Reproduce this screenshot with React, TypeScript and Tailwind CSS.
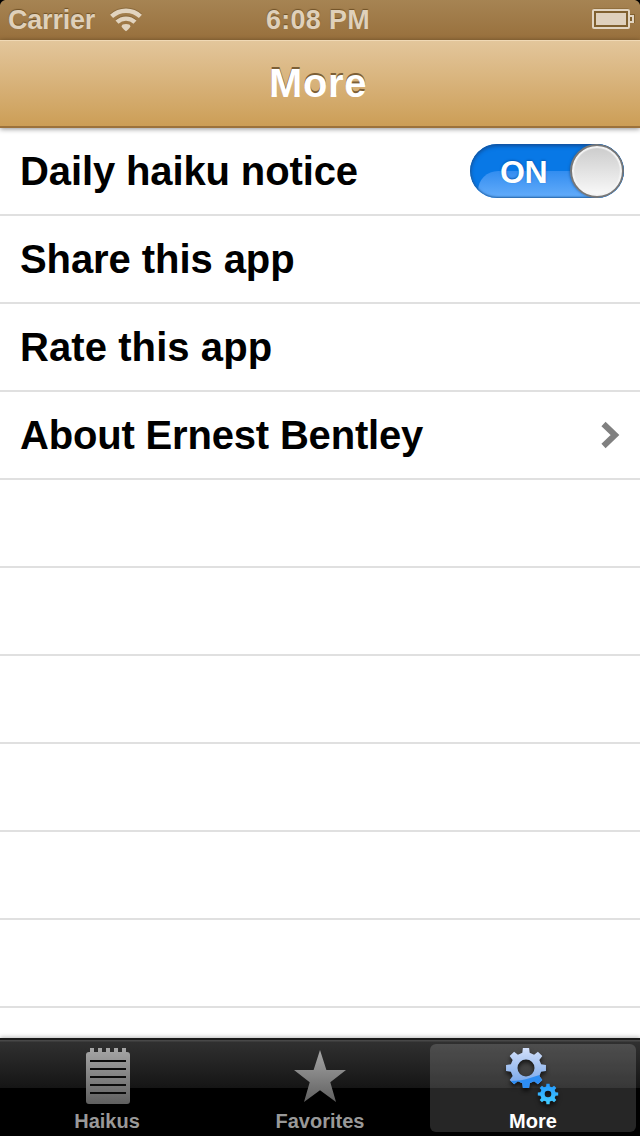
import type { ReactNode } from "react";

interface RowProps {
  label?: string;
  spacing?: string;
  children?: ReactNode;
}

function Row({ label, spacing = "", children }: RowProps) {
  return (
    <li className="flex h-[88px] shrink-0 items-center justify-between border-b-2 border-[#e0e0e0] pl-5">
      <span className={`text-[40px] leading-[86px] font-bold whitespace-nowrap text-black ${spacing}`}>
        {label}
      </span>
      {children}
    </li>
  );
}

function StatusBar() {
  return (
    <header className="relative flex h-10 items-start justify-between bg-gradient-to-b from-[#a68453] to-[#98703c] text-[27px] leading-10 font-bold text-[#dfd0ba] [text-shadow:0_-1px_1px_#6f5127]">
      {/* Rounded screen corners */}
      <svg className="absolute top-0 left-0" width="640" height="5" viewBox="0 0 640 5">
        <path d="M0 0h5Q1 1 0 5zM640 0h-5q4 1 5 5z" fill="#000" />
      </svg>
      <div className="flex w-[213px] pl-2">
        <span className="w-[101px] tracking-[-0.2px]">Carrier</span>
        <svg className="mt-[7px]" width="34" height="25" viewBox="109 7 34 25">
          <g fill="none" stroke="#715329" strokeWidth="4.600" opacity=".5">
            <path d="M111.600 15.500a21 21 0 0 1 28.800 0M117 21.300a13 13 0 0 1 18 0" />
          </g>
          <g fill="none" stroke="#e2d4bf" strokeWidth="4.400">
            <path d="M111.600 16.400a21 21 0 0 1 28.800 0M117 22.200a13 13 0 0 1 18 0" />
          </g>
          <path d="M121.700 26.300q0-2.300 4.300-2.300t4.300 2.300q0 1.500-4.300 5-4.300-3.500-4.300-5z" fill="#e2d4bf" />
        </svg>
      </div>
      <span className="w-[213px] pr-1 text-center tracking-[0.25px]">6:08 PM</span>
      <div className="flex w-[213px] justify-end pt-2 pr-[5px]">
        <svg width="44" height="22" viewBox="591 8 44 22">
          <rect x="592.500" y="8.500" width="37" height="20" rx="2" fill="#80602f" />
          <path d="M629 14h6v9h-6z" fill="#80602f" />
          <rect x="593" y="10" width="36" height="18" rx="1" fill="none" stroke="#e2d5c2" strokeWidth="2" />
          <path d="M630 16h3v6h-3" fill="none" stroke="#e2d5c2" strokeWidth="2" />
          <rect x="596" y="13" width="30" height="12" fill="#dfd0bc" />
        </svg>
      </div>
    </header>
  );
}

function Switch() {
  return (
    <div className="relative mr-4 flex h-[54px] w-[154px] items-center justify-end overflow-hidden rounded-full bg-[#0878e6]">
      {/* Glossy lower half */}
      <div className="absolute top-[27px] left-2 h-[40px] w-[154px] rounded-[22px] bg-gradient-to-b from-[#328df0] to-[#79bcff]" />
      <div className="absolute inset-0 rounded-full shadow-[inset_0_2px_4px_#0b4fa0,inset_0_0_2px_1px_#2b69a9]" />
      <span className="absolute top-0 left-[30px] text-[32px] leading-[56px] font-bold tracking-[-0.4px] text-white [text-shadow:0_-1px_2px_#075bb5]">
        ON
      </span>
      <div className="relative h-[54px] w-[54px] rounded-full border-2 border-[#777] bg-gradient-to-b from-[#cbcbcb] to-[#fafafa] shadow-[-1px_0_2px_#17508f80,inset_0_0_1px_2px_#f4f4f4]" />
    </div>
  );
}

// Eight-toothed gear outline with a round hole
function gearPath(cx: number, cy: number, outer: number, root: number, hole: number) {
  const points: string[] = [];
  for (let i = 0; i < 8; i++) {
    const a = (i * Math.PI) / 4;
    const corners = [
      [root, -0.24],
      [outer, -0.155],
      [outer, 0.155],
      [root, 0.24],
    ];
    for (const [r, d] of corners) {
      points.push(`${(cx + r * Math.cos(a + d)).toFixed(2)} ${(cy + r * Math.sin(a + d)).toFixed(2)}`);
    }
  }
  return `M${points.join("L")}ZM${cx - hole} ${cy}a${hole} ${hole} 0 1 0 ${hole * 2} 0a${hole} ${hole} 0 1 0 ${-hole * 2} 0Z`;
}

function NotepadIcon() {
  return (
    <svg width="60" height="60" viewBox="-1 0 60 60">
      <defs>
        <linearGradient id="grey" x1="0" y1="0" x2="0" y2="1">
          <stop offset="0" stopColor="#a6a6a6" />
          <stop offset="1" stopColor="#606060" />
        </linearGradient>
      </defs>
      <path
        d="M12 4h4v4h4V4h4v4h4V4h4v4h4V4h4v4h4V4h4v4h1q3 0 3 3v46q0 3-3 3H11q-3 0-3-3V11q0-3 3-3h1z"
        fill="url(#grey)"
      />
      <path d="M12 17h36M12 25h36M12 33h36M12 41h36M12 49h36" stroke="#0c0c0c" strokeWidth="2" />
    </svg>
  );
}

function StarIcon() {
  return (
    <svg width="60" height="60" viewBox="0 0 60 60">
      <path d="M30 6l6.400 20H56L40.300 38.300 46 58 30 46.300 14 58l5.700-19.700L4 26h19.600z" fill="url(#grey)" />
    </svg>
  );
}

function GearsIcon() {
  return (
    <svg className="overflow-visible drop-shadow-[0_3px_2px_#000000aa]" width="60" height="60" viewBox="503 1044 60 60">
      <defs>
        <linearGradient id="gear" x1="0" y1="0" x2="0" y2="1">
          <stop offset="0" stopColor="#d3e0fa" />
          <stop offset="1" stopColor="#6c9fe7" />
        </linearGradient>
        <linearGradient id="small" x1="0" y1="0" x2="0" y2="1">
          <stop offset="0" stopColor="#2499ff" />
          <stop offset="1" stopColor="#43cdff" />
        </linearGradient>
        <clipPath id="low">
          <path d="M510 1081q12 0 20-3t18-5v20h-38z" />
        </clipPath>
      </defs>
      <path d={gearPath(526, 1068, 20.2, 15.6, 8.5)} fill="url(#gear)" fillRule="evenodd" />
      <path d={gearPath(526, 1068, 20.2, 15.6, 8.5)} fill="#2d8df3" fillRule="evenodd" clipPath="url(#low)" />
      <path d={gearPath(548, 1094, 10.3, 7.8, 3.3)} fill="url(#small)" fillRule="evenodd" />
    </svg>
  );
}

interface TabProps {
  label: string;
  icon: ReactNode;
  active?: boolean;
}

function Tab({ label, icon, active }: TabProps) {
  return (
    <div
      className={`flex h-[88px] w-[206px] flex-col items-center rounded-md text-[20px] leading-5 font-bold ${
        active ? "bg-white/15 text-white" : "text-[#999]"
      }`}
    >
      {icon}
      <span className="mt-[7px]">{label}</span>
    </div>
  );
}

export default function App() {
  return (
    <div className="flex h-[1136px] w-[640px] flex-col overflow-hidden bg-white font-['Liberation_Sans',Arial,sans-serif]">
      <StatusBar />
      <nav className="relative z-10 h-[88px] border-t border-b-2 border-t-[#f0d9b5] border-b-[#9c723b] bg-gradient-to-b from-[#e3c69b] to-[#cc9e56] pr-1 text-center shadow-[0_1px_5px_#00000070]">
        <h1 className="text-[40px] leading-[84px] font-bold tracking-[0.6px] text-white [text-shadow:0_-2px_0_#7c5f36]">
          More
        </h1>
      </nav>
      <ul className="flex min-h-0 flex-1 flex-col overflow-hidden">
        <Row label="Daily haiku notice" spacing="tracking-[-0.12px]">
          <Switch />
        </Row>
        <Row label="Share this app" spacing="tracking-[-0.08px]" />
        <Row label="Rate this app" spacing="tracking-[0.08px]" />
        <Row label="About Ernest Bentley" spacing="tracking-[-0.18px]">
          <svg className="mr-5" width="20" height="28" viewBox="0 0 20 28">
            <path d="M3.500 3l11.500 11-11.500 11" fill="none" stroke="#808080" strokeWidth="6" />
          </svg>
        </Row>
        <Row />
        <Row />
        <Row />
        <Row />
        <Row />
        <Row />
        <Row />
      </ul>
      <footer className="relative flex h-[98px] shrink-0 justify-between border-t-2 border-[#1a1a1a] bg-[linear-gradient(to_bottom,#484848_0,#484848_1px,#303030_2px,#151515_48px,#000_48px)] px-1 pt-1 shadow-[0_-1px_4px_#00000045]">
        <Tab label="Haikus" icon={<NotepadIcon />} />
        <Tab label="Favorites" icon={<StarIcon />} />
        <Tab label="More" icon={<GearsIcon />} active />
      </footer>
    </div>
  );
}
